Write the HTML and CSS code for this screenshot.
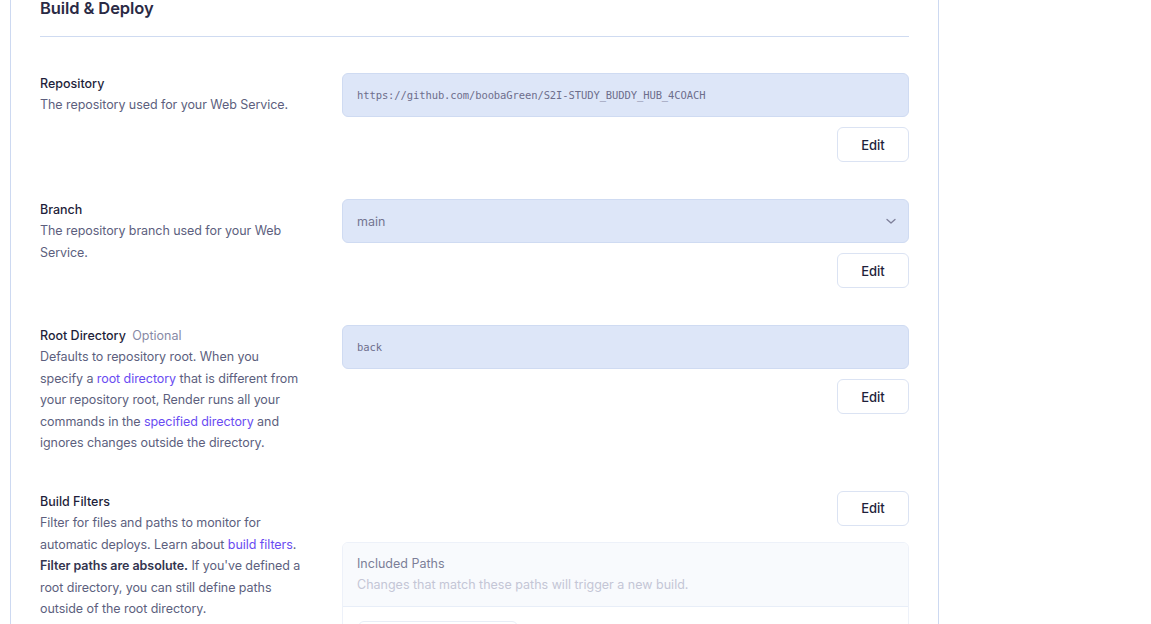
FILE: index.html
```html
<!DOCTYPE html>
<html>
<head>
<meta charset="utf-8">
<link rel="stylesheet" href="styles.css">
</head>
<body>
<div class="card">
  <h2 class="title">Build &amp; Deploy</h2>
  <div class="divider"></div>

  <div class="row">
    <div class="info">
      <div class="label">Repository</div>
      <div class="desc">The repository used for your Web Service.</div>
    </div>
    <div class="control">
      <div class="field mono">https://github.com/boobaGreen/S2I-STUDY_BUDDY_HUB_4COACH</div>
      <button class="btn">Edit</button>
    </div>
  </div>

  <div class="row">
    <div class="info">
      <div class="label">Branch</div>
      <div class="desc">The repository branch used for your Web Service.</div>
    </div>
    <div class="control">
      <div class="field select"><span>main</span>
        <svg class="chev" width="12" height="12" viewBox="0 0 12 12"><path d="M2 4.5 L6 8 L10 4.5" fill="none" stroke="#7d7f99" stroke-width="1.3" stroke-linecap="round" stroke-linejoin="round"/></svg>
      </div>
      <button class="btn">Edit</button>
    </div>
  </div>

  <div class="row">
    <div class="info">
      <div class="label">Root Directory <span class="opt">Optional</span></div>
      <div class="desc">Defaults to repository root. When you specify a <a class="link">root directory</a> that is different from your repository root, Render runs all your commands in the <a class="link">specified directory</a> and ignores changes outside the directory.</div>
    </div>
    <div class="control">
      <div class="field mono">back</div>
      <button class="btn">Edit</button>
    </div>
  </div>

  <div class="row">
    <div class="info">
      <div class="label">Build Filters</div>
      <div class="desc">Filter for files and paths to monitor for automatic deploys. Learn about <a class="link">build filters</a>. <strong class="strong">Filter paths are absolute.</strong> If you've defined a root directory, you can still define paths outside of the root directory.</div>
    </div>
    <div class="control">
      <button class="btn">Edit</button>
      <div class="filters">
        <div class="filters-head">
          <div class="fh-title">Included Paths</div>
          <div class="fh-desc">Changes that match these paths will trigger a new build.</div>
        </div>
        <div class="filters-body">
          <div class="path-input"></div>
        </div>
      </div>
    </div>
  </div>
</div>
</body>
</html>
```

FILE: styles.css
```css
* { box-sizing: border-box; }
html, body { margin: 0; padding: 0; background: #ffffff; }
body {
  font-family: Inter, "Noto Sans", sans-serif;
  color: #23233f;
  overflow: hidden;
  height: 624px;
}
.card {
  margin-left: 10px;
  width: 929px;
  border-left: 1px solid #cdd9f1;
  border-right: 1px solid #cdd9f1;
  padding: 0 29px;
  min-height: 700px;
}
.title {
  margin: 0;
  font-size: 16.5px;
  line-height: 17px;
  font-weight: 600;
  color: #2a2a45;
  letter-spacing: -0.1px;
}
.divider {
  height: 1px;
  background: #cfdbf1;
  margin: 19px 0 36px;
}
.row {
  display: grid;
  grid-template-columns: 262.5px 1fr;
  column-gap: 39.5px;
  padding-bottom: 37px;
}
.label {
  font-size: 12.5px;
  line-height: 21px;
  font-weight: 500;
  color: #1f1f3b;
}
.opt {
  font-weight: 400;
  color: #878aa6;
  margin-left: 3px;
}
.desc {
  font-size: 12.5px;
  line-height: 21.6px;
  color: #5d5f7e;
  letter-spacing: -0.06px;
}
.link { color: #6a4cf2; text-decoration: none; }
.strong { font-weight: 600; color: #34354f; }
.control {
  display: flex;
  flex-direction: column;
  align-items: flex-end;
  gap: 10px;
}
.field {
  width: 100%;
  height: 44px;
  background: #dde6f8;
  border: 1px solid #cfdbf2;
  border-radius: 6px;
  display: flex;
  align-items: center;
  padding: 0 14px;
  color: #6d6e8c;
}
.mono {
  font-family: "DejaVu Sans Mono", "Liberation Mono", monospace;
  font-size: 10.5px;
  letter-spacing: -0.1px;
}
.select {
  justify-content: space-between;
  font-size: 12.5px;
  color: #737591;
}
.chev { margin-right: -3px; }
.btn {
  width: 72px;
  height: 35px;
  background: #ffffff;
  border: 1px solid #dbe3f3;
  border-radius: 6px;
  font-family: Inter, "Noto Sans", sans-serif;
  font-size: 13px;
  font-weight: 500;
  color: #1f1f3b;
  padding: 0;
}
.filters {
  width: 100%;
  margin-top: 6px;
  border: 1px solid #edf1f9;
  border-radius: 6px;
  overflow: hidden;
}
.filters-head {
  background: #f8fafd;
  padding: 10px 14px 10px;
  border-bottom: 1px solid #e8eef8;
}
.fh-title {
  font-size: 12.5px;
  line-height: 21px;
  color: #7c7e98;
}
.fh-desc {
  font-size: 12.5px;
  line-height: 22px;
  color: #c4c6d6;
}
.filters-body {
  padding: 14px 15px;
  background: #ffffff;
}
.path-input {
  width: 160px;
  height: 36px;
  border: 1px solid #e8edf6;
  border-radius: 6px;
}
```
